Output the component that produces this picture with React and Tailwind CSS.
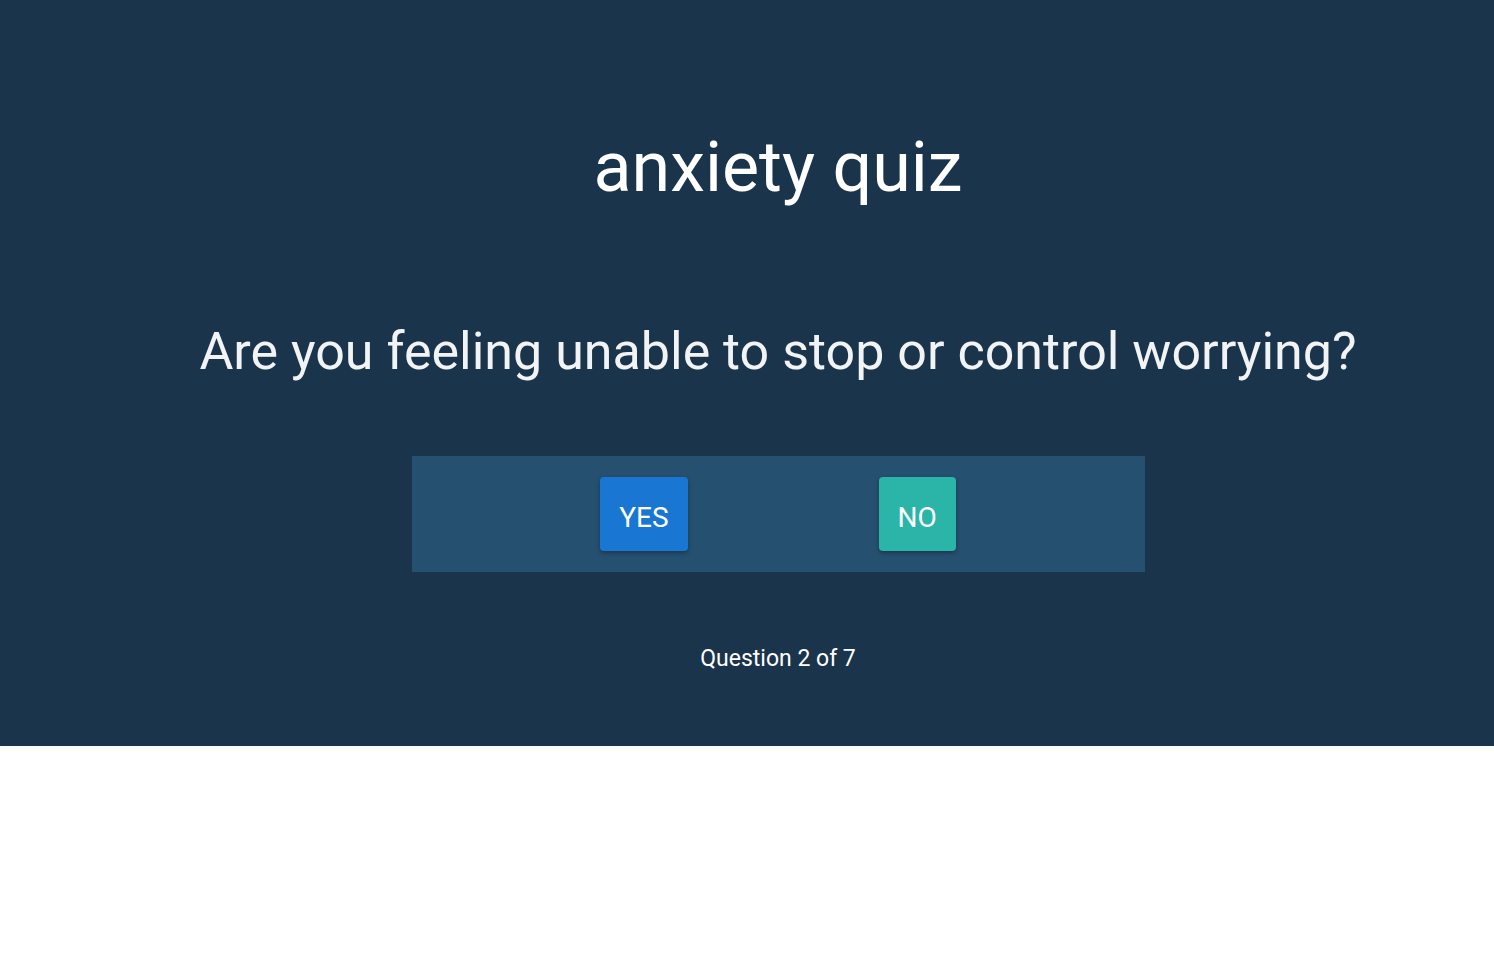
export default function App() {
  return (
    <div className="min-h-screen bg-white" style={{ fontFamily: "Roboto, sans-serif" }}>
      <section className="flex h-[746px] flex-col items-center bg-[#1a344b] pl-[62px] text-white">
        <h1 className="mt-[127px] text-[70px] leading-[80px] font-normal">anxiety quiz</h1>
        <p className="mt-[113px] text-[52px] leading-[64px] text-[#f1f3f5]">
          Are you feeling unable to stop or control worrying?
        </p>
        <div className="mt-[72px] flex h-[116px] w-[733px] items-center justify-center gap-[191px] bg-[#25506f]">
          <button className="h-[74px] rounded-[4px] bg-[#1976d2] px-[19px] pt-[7px] text-[28px] text-white shadow-[0_2px_4px_rgba(0,0,0,0.3)]">
            YES
          </button>
          <button className="h-[74px] rounded-[4px] bg-[#2ab5a8] px-[19px] pt-[7px] text-[28px] text-white shadow-[0_2px_4px_rgba(0,0,0,0.3)]">
            NO
          </button>
        </div>
        <p className="mt-[73px] text-[23px] leading-[28px]">Question 2 of 7</p>
      </section>
    </div>
  );
}
